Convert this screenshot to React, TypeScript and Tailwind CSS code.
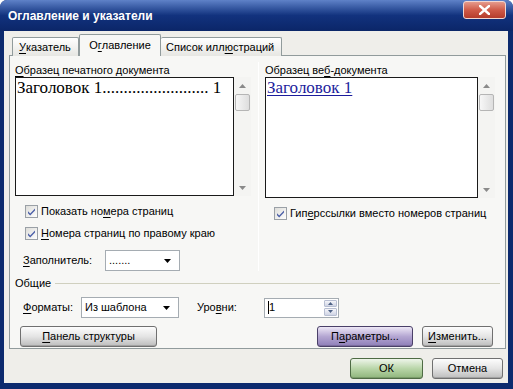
import React from "react";

const font = { fontFamily: '"Liberation Sans", Arial, sans-serif' };
const serif = { fontFamily: '"Liberation Serif", "Times New Roman", serif' };

function U({ children }: { children: React.ReactNode }) {
  return <span className="underline underline-offset-[2px]">{children}</span>;
}

function Check() {
  return (
    <svg width="13" height="13" viewBox="0 0 13 13" className="shrink-0">
      <defs>
        <linearGradient id="cbg" x1="0" y1="0" x2="1" y2="1">
          <stop offset="0" stopColor="#dcdcd8" />
          <stop offset="1" stopColor="#ffffff" />
        </linearGradient>
      </defs>
      <rect x="0.5" y="0.5" width="12" height="12" fill="url(#cbg)" stroke="#9aa0a6" />
      <path d="M3 6.2 L5.2 8.6 L10 3.4 L10 5.6 L5.2 10.6 L3 8.2 Z" fill="#4b5fa8" />
    </svg>
  );
}

function Arrow() {
  return (
    <svg width="7" height="4" viewBox="0 0 7 4">
      <path d="M0 0 H7 L3.5 4 Z" fill="#000" />
    </svg>
  );
}

function Dropdown({ w, text }: { w: string; text: string }) {
  return (
    <div className={`${w} h-[21px] bg-white border border-[#a5acb2] flex items-center pl-[3px] pr-[8px]`}>
      <span className="flex-1 text-[11px] text-black">{text}</span>
      <Arrow />
    </div>
  );
}

function ScrollBar() {
  return (
    <div className="w-[17px] h-full bg-[#f4f4f2] flex flex-col items-center">
      <div className="h-[15px] w-full flex items-center justify-center pt-[2px]">
        <svg width="7" height="4" viewBox="0 0 7 4">
          <path d="M0 4 L3.5 0 L7 4 Z" fill="#8a8a8a" />
        </svg>
      </div>
      <div className="mt-[2px] w-[15px] h-[17px] rounded-[2px] border border-[#b5b5b5] bg-gradient-to-r from-[#f7f7f7] to-[#dedede]" />
      <div className="flex-1" />
      <div className="h-[15px] w-full flex items-center justify-center pb-[2px]">
        <svg width="7" height="4" viewBox="0 0 7 4">
          <path d="M0 0 H7 L3.5 4 Z" fill="#8a8a8a" />
        </svg>
      </div>
    </div>
  );
}

function Btn({
  w,
  kind = "gray",
  children,
}: {
  w: string;
  kind?: "gray" | "purple" | "green";
  children: React.ReactNode;
}) {
  const tone =
    kind === "purple"
      ? "bg-gradient-to-b from-[#eee8f6] via-[#b4a6d2] to-[#8f7fb8] border-[#4a4068]"
      : kind === "green"
      ? "bg-gradient-to-b from-[#eef5ea] via-[#b9d6a9] to-[#8fb57c] border-[#4e6b44]"
      : "bg-gradient-to-b from-[#fdfdfd] via-[#e4e4e4] to-[#bdbdbd] border-[#707070]";
  return (
    <div
      className={`${w} h-[21px] rounded-[3px] border ${tone} flex items-center justify-center text-[11px] text-black shadow-[inset_0_-1px_0_rgba(0,0,0,0.15)]`}
    >
      {children}
    </div>
  );
}

export default function App() {
  return (
    <div className="w-[513px] h-[389px] flex flex-col bg-[#0c2a6e] rounded-t-[7px] overflow-hidden" style={font}>
      {/* title bar */}
      <div className="h-[31px] shrink-0 relative bg-gradient-to-b from-[#5f82c8] via-[#12327e] to-[#0b2668] flex items-center pl-[8px] pt-[1px]">
        <span className="text-white font-bold text-[12px]">Оглавление и указатели</span>
        <div className="absolute right-[7px] top-[1px] w-[43px] h-[18px] rounded-[3px] border border-[#f2d6d0] bg-gradient-to-b from-[#e59a8c] via-[#cf5a48] to-[#b53c2c] flex items-center justify-center">
          <svg width="11" height="10" viewBox="0 0 11 10">
            <path d="M1 1 L10 9 M10 1 L1 9" stroke="#fff" strokeWidth="2.4" strokeLinecap="square" />
          </svg>
        </div>
      </div>

      {/* body */}
      <div className="h-[352px] ml-[4px] mr-[5px] bg-[#efeeea] flex flex-col">
        {/* tabs */}
        <div className="h-[25px] pt-[3px] pl-[8px] flex items-end relative z-10">
          <div className="w-[67px] h-[19px] border border-b-0 border-[#919b9c] bg-gradient-to-b from-[#ffffff] to-[#e6e6e2] rounded-t-[2px] flex items-center pl-[6px] text-[11px] text-black">
            <U>У</U>казатель
          </div>
          <div className="w-[82px] h-[22px] border border-b-0 border-[#919b9c] bg-[#f7f7f5] rounded-t-[2px] flex items-center justify-center text-[11px] text-black">
            О<U>г</U>лавление
          </div>
          <div className="w-[121px] h-[19px] border border-b-0 border-l-0 border-[#919b9c] bg-gradient-to-b from-[#ffffff] to-[#e6e6e2] rounded-t-[2px] flex items-center pl-[5px] text-[11px] text-black">
            Список илл<U>ю</U>страций
          </div>
        </div>

        {/* panel */}
        <div className="-mt-px ml-[5px] w-[497px] h-[294px] border border-[#919b9c] bg-[#f7f7f5] flex flex-col text-[11px] text-black">
          <div className="flex h-[215px]">
            {/* left column */}
            <div className="w-[248px] pl-[5px] flex flex-col">
              <div className="mt-[7px] h-[14px] leading-[14px]">
                <U>О</U>бразец печатного документа
              </div>
              <div className="flex h-[121px]">
                <div className="w-[219px] h-full border border-[#1a1a1a] bg-white pl-[1px] pt-[1px]" style={serif}>
                  <div className="text-[17px] leading-[18px] whitespace-nowrap">Заголовок 1......................... 1</div>
                </div>
                <ScrollBar />
              </div>
              <div className="mt-[9px] ml-[10px] h-[13px] flex items-center gap-[3px]">
                <Check />
                <span>
                  Показать но<U>м</U>ера страниц
                </span>
              </div>
              <div className="mt-[9px] ml-[10px] h-[13px] flex items-center gap-[3px]">
                <Check />
                <span>
                  <U>Н</U>омера страниц по правому краю
                </span>
              </div>
              <div className="mt-[10px] ml-[8px] flex items-center">
                <span className="w-[82px]">
                  <U>З</U>аполнитель:
                </span>
                <Dropdown w="w-[75px]" text="......." />
              </div>
            </div>
            {/* separator */}
            <div className="mt-[6px] w-px h-[209px] bg-[#c8c8c4] border-r border-white" />
            {/* right column */}
            <div className="flex-1 pl-[6px] flex flex-col">
              <div className="mt-[7px] h-[14px] leading-[14px]">
                Образец ве<U>б</U>-документа
              </div>
              <div className="flex h-[121px]">
                <div className="w-[213px] h-full border border-[#1a1a1a] bg-white pl-[1px] pt-[1px]" style={serif}>
                  <span className="text-[17px] leading-[18px] text-[#1c1c9c] underline underline-offset-[2px]">Заголовок 1</span>
                </div>
                <ScrollBar />
              </div>
              <div className="mt-[9px] ml-[9px] h-[13px] flex items-center gap-[3px]">
                <Check />
                <span>
                  Гип<U>е</U>рссылки вместо номеров страниц
                </span>
              </div>
            </div>
          </div>

          {/* general group */}
          <div className="mt-[6px] pl-[5px] flex items-center h-[13px]">
            <span>Общие</span>
            <div className="ml-[4px] mr-[5px] flex-1 h-px bg-[#d0d0bf]" />
          </div>
          <div className="mt-[7px] pl-[13px] flex items-center h-[21px]">
            <span className="w-[58px]">
              <U>Ф</U>орматы:
            </span>
            <Dropdown w="w-[98px]" text="Из шаблона" />
            <span className="ml-[18px] w-[67px]">
              Уро<U>в</U>ни:
            </span>
            <div className="w-[75px] h-[20px] bg-white border border-[#a5acb2] flex items-center pl-[3px]">
              <span className="w-px h-[13px] bg-black" />
              <span className="flex-1 leading-none">1</span>
              <div className="w-[15px] h-full flex flex-col gap-px p-px">
                <div className="flex-1 rounded-[1px] bg-gradient-to-b from-[#f6f6fa] to-[#cfd4e4] border border-[#b8bfd2] flex items-center justify-center">
                  <svg width="5" height="3" viewBox="0 0 5 3"><path d="M0 3 L2.5 0 L5 3 Z" fill="#4d6185" /></svg>
                </div>
                <div className="flex-1 rounded-[1px] bg-gradient-to-b from-[#f6f6fa] to-[#cfd4e4] border border-[#b8bfd2] flex items-center justify-center">
                  <svg width="5" height="3" viewBox="0 0 5 3"><path d="M0 0 H5 L2.5 3 Z" fill="#4d6185" /></svg>
                </div>
              </div>
            </div>
          </div>
          <div className="mt-[8px] pl-[10px] pr-[12px] flex items-center">
            <Btn w="w-[137px]">
              <U>П</U>анель структуры
            </Btn>
            <div className="flex-1" />
            <Btn w="w-[96px]" kind="purple">
              П<U>а</U>раметры...
            </Btn>
            <div className="w-[9px]" />
            <Btn w="w-[71px]">
              <U>И</U>зменить...
            </Btn>
          </div>
        </div>

        {/* dialog buttons */}
        <div className="mt-[9px] pr-[5px] flex justify-end gap-[9px]">
          <Btn w="w-[73px]" kind="green">
            ОК
          </Btn>
          <Btn w="w-[71px]">Отмена</Btn>
        </div>
      </div>
    </div>
  );
}
